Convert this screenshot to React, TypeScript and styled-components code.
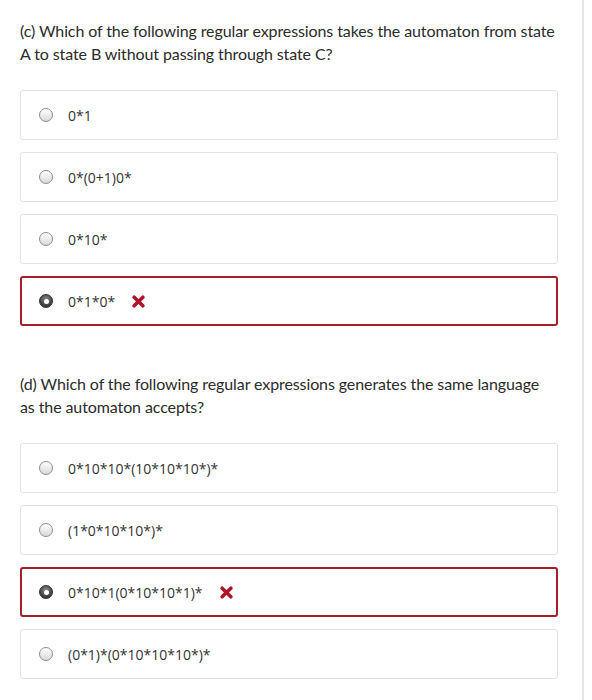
import React from "react";
import styled, { createGlobalStyle } from "styled-components";

const Global = createGlobalStyle`
  html, body { margin: 0; padding: 0; background: #fff; }
  body { font-family: Lato, "Noto Sans", sans-serif; color: #333; }
`;

const Page = styled.div`
  width: 584px;
  min-height: 700px;
  border-right: 2px solid #e6e6e6;
  box-sizing: border-box;
  padding: 19px 24px 0 20px;
`;

const Question = styled.section<{ $top: number }>`
  margin-top: ${(p) => p.$top}px;
`;

const Prompt = styled.p`
  margin: 0 0 25px;
  max-width: 536px;
  font-size: 16px;
  line-height: 23px;
  color: #2b2b2b;
  letter-spacing: -0.1px;
`;

const Options = styled.div`
  display: flex;
  flex-direction: column;
  gap: 12px;
`;

const Card = styled.label<{ $wrong?: boolean }>`
  display: flex;
  align-items: center;
  height: 50px;
  box-sizing: border-box;
  border: ${(p) => (p.$wrong ? "2px solid #a31f2e" : "1px solid #e2e2e2")};
  border-radius: 3px;
  padding-left: ${(p) => (p.$wrong ? "17px" : "18px")};
  font-family: "Open Sans", "Noto Sans", sans-serif;
  font-size: 14px;
  color: #333;
`;

const Radio = styled.span<{ $checked?: boolean }>`
  width: 14px;
  height: 14px;
  border-radius: 50%;
  box-sizing: border-box;
  flex: none;
  margin-right: 15px;
  display: flex;
  align-items: center;
  justify-content: center;
  ${(p) =>
    p.$checked
      ? `background: radial-gradient(circle at 50% 35%, #8a8a8a, #3a3a3a 70%);
         border: 1px solid #2e2e2e;`
      : `background: linear-gradient(#ffffff, #d9d9d9);
         border: 1px solid #8c8c8c;`}
`;

const Dot = styled.span`
  width: 5px;
  height: 5px;
  border-radius: 50%;
  background: #fff;
`;

const Cross = styled.svg`
  margin-left: 17px;
  width: 13px;
  height: 13px;
`;

type Opt = { text: string; wrong?: boolean };

const qc: Opt[] = [
  { text: "0*1" },
  { text: "0*(0+1)0*" },
  { text: "0*10*" },
  { text: "0*1*0*", wrong: true },
];

const qd: Opt[] = [
  { text: "0*10*10*(10*10*10*)*" },
  { text: "(1*0*10*10*)*" },
  { text: "0*10*1(0*10*10*1)*", wrong: true },
  { text: "(0*1)*(0*10*10*10*)*" },
];

function Option({ o }: { o: Opt }) {
  return (
    <Card $wrong={o.wrong}>
      <Radio $checked={o.wrong}>{o.wrong && <Dot />}</Radio>
      <span>{o.text}</span>
      {o.wrong && (
        <Cross viewBox="0 0 12 12">
          <path d="M2 2 L10 10 M10 2 L2 10" stroke="#b0122a" strokeWidth="3.3" strokeLinecap="round" />
        </Cross>
      )}
    </Card>
  );
}

export default function App() {
  return (
    <>
      <Global />
      <Page>
        <Question $top={0}>
          <Prompt>
            (c) Which of the following regular expressions takes the automaton from state A to state B
            without passing through state C?
          </Prompt>
          <Options>
            {qc.map((o, i) => (
              <Option key={i} o={o} />
            ))}
          </Options>
        </Question>
        <Question $top={46}>
          <Prompt>
            (d) Which of the following regular expressions generates the same language as the automaton
            accepts?
          </Prompt>
          <Options>
            {qd.map((o, i) => (
              <Option key={i} o={o} />
            ))}
          </Options>
        </Question>
      </Page>
    </>
  );
}
